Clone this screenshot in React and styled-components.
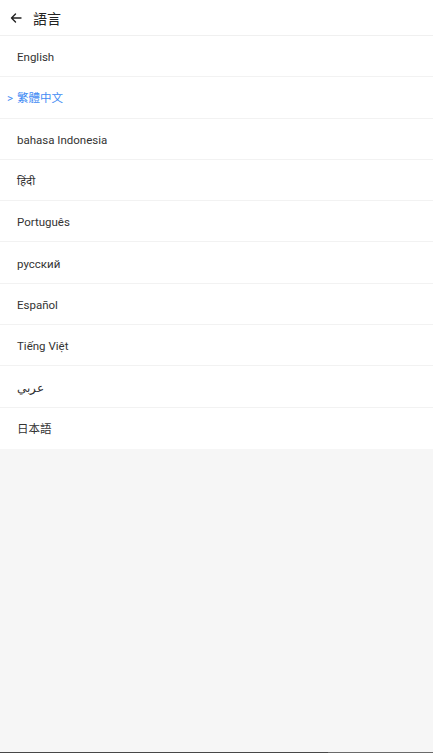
import React from 'react'
import styled, { createGlobalStyle } from 'styled-components'

const languages = [
  { label: 'English' },
  { label: '繁體中文', active: true },
  { label: 'bahasa Indonesia' },
  { label: 'हिंदी' },
  { label: 'Português' },
  { label: 'русский' },
  { label: 'Español' },
  { label: 'Tiếng Việt' },
  { label: 'عربي' },
  { label: '日本語' },
]

const App = () => {
  return (
    <>
      <GlobalStyle />
      <Page>
        <Header>
          <BackButton aria-label="back">
            <svg width="12" height="12" viewBox="0 0 12 12" fill="none">
              <path d="M11 6H1.5M5.5 2L1.5 6l4 4" stroke="#222" strokeWidth="1.4" strokeLinecap="round" strokeLinejoin="round" />
            </svg>
          </BackButton>
          <Title>語言</Title>
        </Header>
        <List>
          {languages.map((lang) => (
            <Item key={lang.label} $active={lang.active}>
              <Label>
                {lang.active && <Marker>&gt;</Marker>}
                {lang.label}
              </Label>
            </Item>
          ))}
        </List>
        <Spacer />
        <NavEdge>
          <NavPart />
          <NavPart $light />
        </NavEdge>
      </Page>
    </>
  )
}

const GlobalStyle = createGlobalStyle`
  html, body, #root {
    margin: 0;
    padding: 0;
    height: 100%;
  }
  body {
    font-family: Roboto, "Noto Sans", "Noto Sans CJK TC", sans-serif;
    background: #f6f6f6;
  }
`;

const Page = styled.div`
  display: flex;
  flex-direction: column;
  height: 100vh;
  background: #f6f6f6;
`;

const Header = styled.header`
  display: flex;
  align-items: center;
  height: 35px;
  padding: 0 10px;
  background: #fff;
  border-bottom: 1px solid #f0f0f0;
`;

const BackButton = styled.button`
  display: flex;
  align-items: center;
  justify-content: center;
  width: 12px;
  height: 12px;
  padding: 0;
  margin-right: 11px;
  border: none;
  background: none;
`;

const Title = styled.h1`
  margin: 0;
  font-size: 14px;
  font-weight: 400;
  color: #222;
  font-family: "Noto Sans CJK TC", sans-serif;
`;

const List = styled.ul`
  list-style: none;
  margin: 0;
  padding: 0;
  background: #fff;
`;

const Item = styled.li`
  display: flex;
  align-items: center;
  box-sizing: border-box;
  height: 41.3px;
  padding-left: ${(p) => (p.$active ? '7px' : '17px')};
  padding-top: 2px;
  color: ${(p) => (p.$active ? '#3f8cf4' : '#333')};
  border-bottom: 1px solid #f2f2f2;

  &:last-child {
    border-bottom: none;
  }
`;

const Label = styled.span`
  font-size: 11.5px;
  line-height: 16px;
  font-family: Roboto, "Noto Sans", "Noto Sans CJK TC", "Noto Sans CJK JP", sans-serif;
`;

const Marker = styled.span`
  margin-right: 4px;
`;

const Spacer = styled.div`
  flex: 1;
`;

const NavEdge = styled.div`
  display: flex;
  height: 1px;
`;

const NavPart = styled.div`
  flex: ${(p) => (p.$light ? '0 0 105px' : '1')};
  background: ${(p) => (p.$light ? '#6a6a6a' : '#474747')};
`;

export default App
